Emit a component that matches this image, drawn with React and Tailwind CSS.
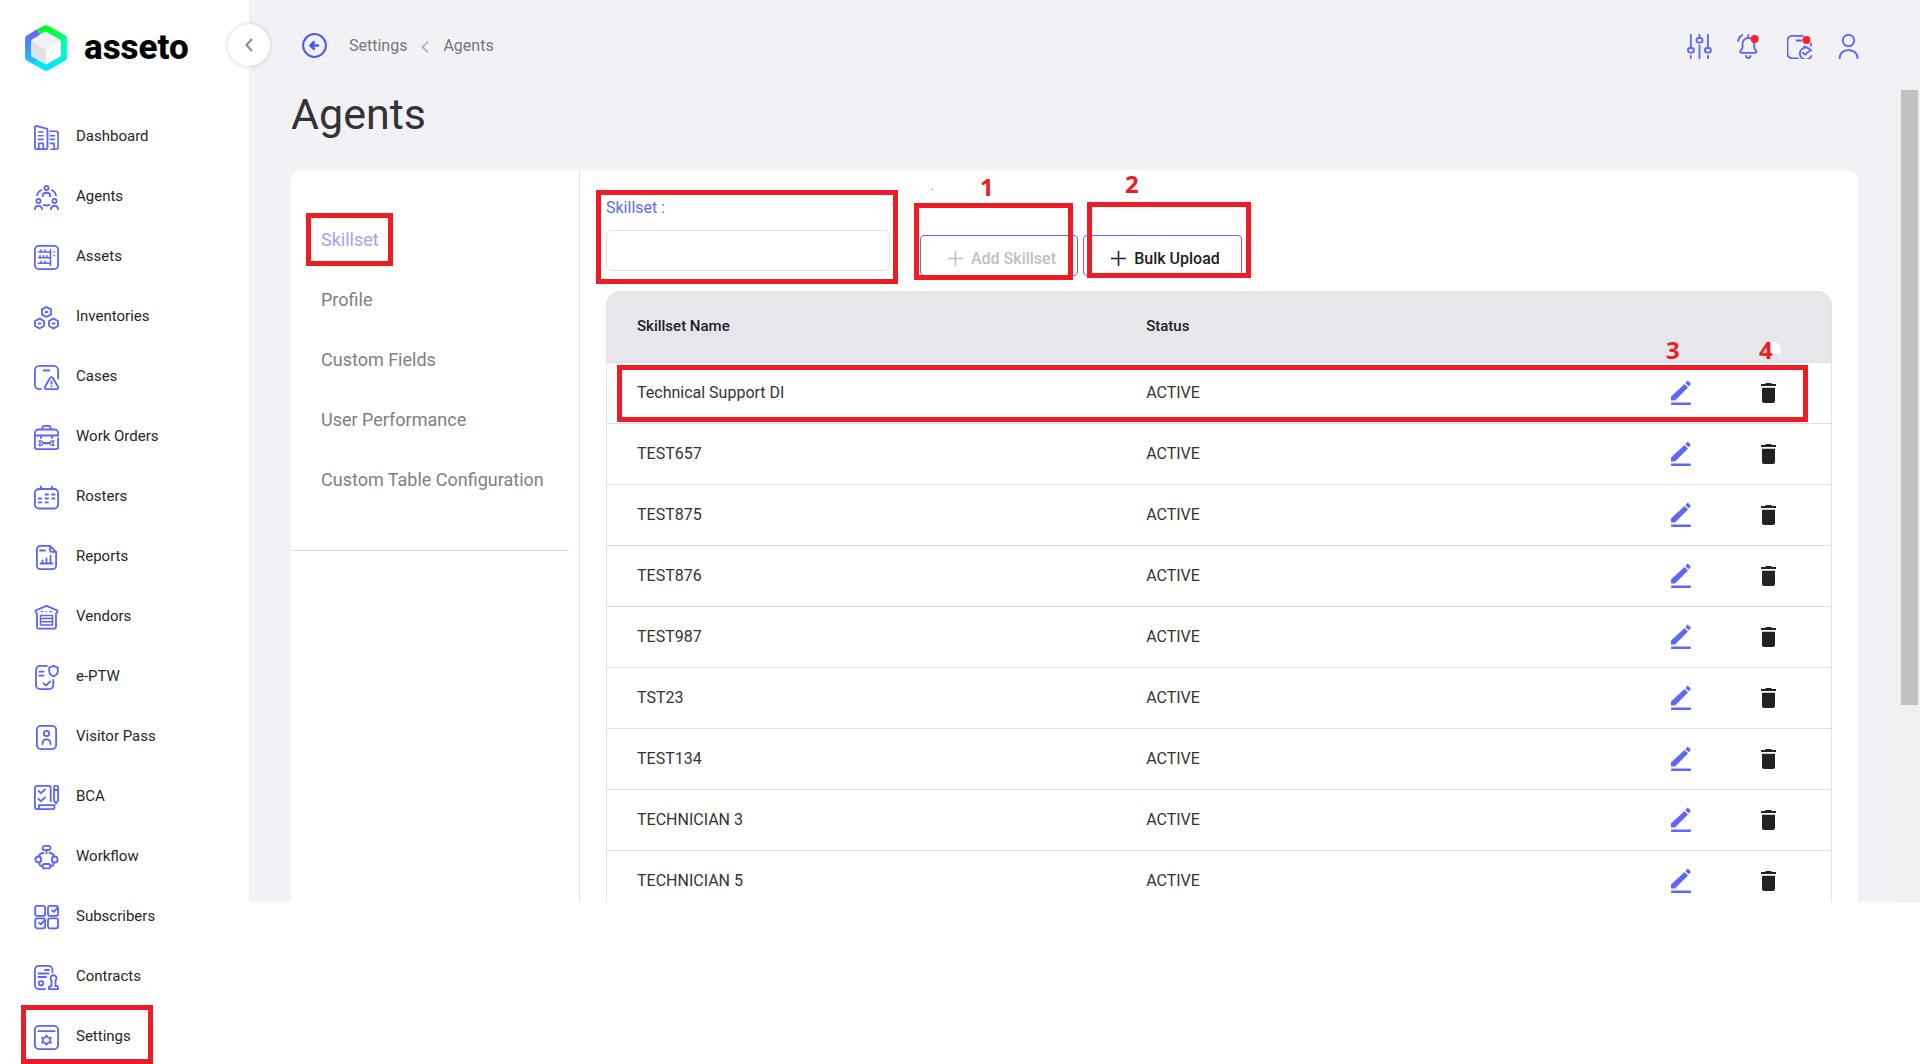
import React from "react";

const Icon = ({ children, className = "h-[25px] w-[25px]" }) => (
  <svg viewBox="0 0 25 25" className={`${className} shrink-0`} fill="none" stroke="#5a62ff" strokeWidth="1.8" strokeLinecap="round" strokeLinejoin="round" aria-hidden="true">
    {children}
  </svg>
);

const menu = [
  {
    label: "Dashboard",
    icon: (
      <>
        <path d="M13.5 22.5V4.6a1 1 0 0 0-.8-1L3 1.1A1.6 1.6 0 0 0 .9 2.6v20a1.6 1.6 0 0 0 1.6 1.6h9.4a1.6 1.6 0 0 0 1.6-1.7Z" />
        <path d="M16 6.3h6a2.2 2.2 0 0 1 2.1 2.2v14.1a1.6 1.6 0 0 1-1.6 1.6H17M4.5 7H9M4.5 10.7H9M4.5 14.4H9M16.3 10.7h4.2M16.3 14.4h4.2M4.8 24v-5.6h4.4V24M16.3 18.4h3.8V24" strokeWidth="1.6" />
      </>
    ),
  },
  {
    label: "Agents",
    icon: (
      <>
        <circle cx="12.5" cy="3" r="2.1" />
        <circle cx="4.5" cy="16" r="2.1" />
        <circle cx="20.5" cy="16" r="2.1" />
        <path d="M8.8 11.2c0-4.6 7.4-4.6 7.4 0M.9 24.4c0-4.7 7.2-4.7 7.2 0M16.9 24.4c0-4.7 7.2-4.7 7.2 0M3 10.4C3.6 8 5 6.2 7 5M22 10.4C21.4 8 20 6.2 18 5M9.7 19.9c1.8.8 3.8.8 5.6 0" />
      </>
    ),
  },
  {
    label: "Assets",
    icon: (
      <>
        <rect x=".9" y=".9" width="23.2" height="23.2" rx="4" />
        <path d="M4.5 7H16M4.5 12.7H16M4.5 18.3H16M16.5 4.6v15.8M7 6.8V5M11 6.8V5M6 12.5v-1.8M9.5 12.5v-1.8M13 12.5v-1.8M7 18v-1.8M11 18v-1.8M20.3 6.8v.1M20.3 10.6v.1" strokeWidth="1.6" />
      </>
    ),
  },
  {
    label: "Inventories",
    icon: (
      <>
        <path d="m12.5 2 4.5 2.4v5L12.5 12 8 9.400v-5ZM5.500 13.600l4.500 2.400v5l-4.500 2.500L1 21v-5ZM19.500 13.600l4.500 2.400v5l-4.500 2.500L15 21v-5Z" />
        <path d="M11.500 7h2M4.500 18.500h2M18.500 18.500h2" />
      </>
    ),
  },
  {
    label: "Cases",
    icon: (
      <>
        <path d="M7 24.1H5.500A4.600 4.600 0 0 1 .9 19.500v-14A4.600 4.600 0 0 1 5.500.9h14a4.600 4.600 0 0 1 4.600 4.600v8M9.700 5.500h5.600" />
        <path d="m16 13-5 8.700a1.600 1.600 0 0 0 1.400 2.400h10.200a1.600 1.600 0 0 0 1.400-2.400L18.900 13a1.700 1.700 0 0 0-2.900 0ZM17.500 16.500v2.200M17.500 21.200v.1" />
      </>
    ),
  },
  {
    label: "Work Orders",
    icon: (
      <>
        <path d="M8.500 4.300V2.500A1.600 1.600 0 0 1 10.100.9h4.800a1.600 1.600 0 0 1 1.600 1.600v1.800M.9 10.500V8a3.500 3.500 0 0 1 3.500-3.500h16.200A3.500 3.500 0 0 1 24.100 8v2.500ZM.9 10.500v11.600a2 2 0 0 0 2 2h19.200a2 2 0 0 0 2-2v-9M7 10.500V13M18 10.500V13" />
        <path d="M5 16c2.400-.6 3.500.4 3.800 1.700h7.400c.3-1.300 1.400-2.300 3.800-1.700l-1.400 2.200 1.400 2.200c-2.400.6-3.500-.4-3.800-1.700H8.800C8.500 20 7.400 21 5 20.400l1.400-2.200Z" strokeWidth="1.300" />
      </>
    ),
  },
  {
    label: "Rosters",
    icon: (
      <>
        <rect x=".9" y="4" width="23.200" height="19.500" rx="4" />
        <path d="M7 1.500V4M18 1.500V4M11.500 9.500h2.500M18 9.500h2.500M4.700 13.500h2.600M11.500 13.500h2.500M18 13.500h2.500M4.700 17.400h2.600M11.500 17.400h2.500" />
      </>
    ),
  },
  {
    label: "Reports",
    icon: (
      <>
        <path d="M16 .9H6.500a3.600 3.600 0 0 0-3.600 3.600v16a3.600 3.600 0 0 0 3.600 3.600h12a3.600 3.600 0 0 0 3.600-3.600V7ZM16 .9v4a2 2 0 0 0 2 2h4M6 5.500h5" />
        <path d="M6.500 18.500h12M8.500 18.500v-3M12.500 18.500v-5M16.500 18.500V11" />
      </>
    ),
  },
  {
    label: "Vendors",
    icon: (
      <>
        <path d="M12.500.9 2.500 4.500A1.500 1.500 0 0 0 2.700 7.400h19.600a1.500 1.500 0 0 0 .2-2.900ZM3 7.500v14.600a1.500 1.500 0 0 0 1.500 1.500h16a1.500 1.500 0 0 0 1.500-1.500V7.500" stroke="none" />
        <path d="M3 8.500v13.600a1.500 1.500 0 0 0 1.500 1.500h16a1.500 1.500 0 0 0 1.500-1.500V8.500M3 8.500 1.600 7V5.500L12.500.9l10.900 4.600V7L22 8.500" />
        <path d="M6.500 20v-9.400h12V20M6.500 13.500h12M6.500 16.700h12M7 20h11M7.500 6.500h1.200M12.400 6.500h.2M16 6.500h1.200" strokeWidth="1.500" />
      </>
    ),
  },
  {
    label: "e-PTW",
    icon: (
      <>
        <path d="M13 .9H6A4 4 0 0 0 2 4.900v15.200a4 4 0 0 0 4 4h9.300a4 4 0 0 0 4-4V15M5.500 6.700h4M5.500 10.700h4M9.500 18.300l2.600 2.300 4-4.200" />
        <path d="m19.500.9 4.300 1.700v3.600c0 2.300-1.500 4-4.300 5.200-2.800-1.200-4.300-2.900-4.300-5.200V2.600Z" />
      </>
    ),
  },
  {
    label: "Visitor Pass",
    icon: (
      <>
        <rect x="2.900" y=".9" width="19.200" height="23.200" rx="4" />
        <circle cx="12.500" cy="8.500" r="2.700" />
        <path d="M8.500 19c0-6.200 8-6.200 8 0" />
      </>
    ),
  },
  {
    label: "BCA",
    icon: (
      <>
        <path d="M16.700 16V3a2.100 2.100 0 0 0-2.100-2.100H3A2.100 2.100 0 0 0 .9 3v19A2.100 2.100 0 0 0 3 24.100h15.500a2 2 0 0 0 2-2v-2H5v2.400A1.600 1.600 0 0 1 3 24" />
        <path d="M4.500 6l2.400 2.200L11 4.500M4.500 14l2.400 2.200L11 12.300M20 2.500a2 2 0 0 1 4.100 0v12.900L22 18.500l-2-3.100ZM20 5h4" />
      </>
    ),
  },
  {
    label: "Workflow",
    icon: (
      <>
        <rect x="8.500" y=".9" width="8" height="4.200" rx="2.100" />
        <ellipse cx="4.300" cy="14.500" rx="2.900" ry="3" />
        <ellipse cx="20.700" cy="14.500" rx="2.900" ry="3" />
        <rect x="8.500" y="19" width="8" height="4.400" rx="2.200" />
        <path d="M12.500 5.300v3M5 11.300C5.500 8.800 7.200 8 9.500 8M20 11.300C19.500 8.800 17.800 8 15.500 8M5.300 17.700c0 2.300 1 3.500 3.200 3.500M19.700 17.700c0 2.300-1 3.500-3.200 3.500" />
      </>
    ),
  },
  {
    label: "Subscribers",
    icon: (
      <>
        <rect x="1.200" y=".9" width="10" height="10" rx="2" />
        <rect x="14" y=".9" width="10" height="10" rx="2" />
        <rect x="1.200" y="13.300" width="10" height="10" rx="2" />
        <rect x="14" y="13.300" width="10" height="10" rx="2" />
        <path d="m18 5.300 1.800 1.600 3.600-4M5 17.700l1.800 1.600 3.600-4" />
      </>
    ),
  },
  {
    label: "Contracts",
    icon: (
      <>
        <path d="M11 24.100H4.900a4 4 0 0 1-4-4V4.900a4 4 0 0 1 4-4h9.500a4 4 0 0 1 4 4v2.600M11 5h4M4.500 8.500h10M4.500 12H12" />
        <circle cx="7" cy="18.300" r="2.200" />
        <path d="M17.500 21v-5.500a3 3 0 1 1 4 0V21h.8a1.600 1.600 0 0 1 1.700 1.600v1.500h-9v-1.500a1.600 1.600 0 0 1 1.600-1.600Z" />
      </>
    ),
  },
  {
    label: "Settings",
    marked: true,
    icon: (
      <>
        <rect x=".9" y=".9" width="23.200" height="23.200" rx="4" />
        <path d="M4.500 6.200h16" />
        <path d="m12.500 10.500 1.600 2.300 2.900-.1-1.300 2.500 1.300 2.500-2.900-.1-1.600 2.300-1.600-2.300-2.900.1 1.300-2.500L8 12.700l2.900.1Z" strokeWidth="1.600" />
      </>
    ),
  },
];

const tabs = ["Skillset", "Profile", "Custom Fields", "User Performance", "Custom Table Configuration"];

const skillsets = ["Technical Support DI", "TEST657", "TEST875", "TEST876", "TEST987", "TST23", "TEST134", "TECHNICIAN 3", "TECHNICIAN 5"];

// Red call-out frame laid over the control it explains
const Frame = ({ className }) => <span className={`pointer-events-none absolute z-10 border-5 border-[#ee1c25] ${className}`} />;

const Num = ({ children, className }) => (
  <span className={`pointer-events-none absolute z-10 font-['Noto_Sans'] text-2xl leading-6 font-bold text-[#ee1c25] ${className}`}>{children}</span>
);

const Logo = () => (
  <a href="#" className="flex items-center gap-[17px]">
    <svg viewBox="0 0 42 46" className="h-[46px] w-[42px]" fill="none" aria-hidden="true">
      <defs>
        <linearGradient id="ring" x1="0" y1="0" x2="0" y2="1">
          <stop offset="0" stopColor="#00ff1e" />
          <stop offset=".45" stopColor="#00ffc0" />
          <stop offset="1" stopColor="#00e4ff" />
        </linearGradient>
        <linearGradient id="ringLeft" x1="0" y1="0" x2="0" y2="1">
          <stop offset="0" stopColor="#6a62fb" />
          <stop offset="1" stopColor="#10c4ff" />
        </linearGradient>
      </defs>
      <path d="M13.500 6.800 21 3.200l17.800 10.100v19.400L21 42.800 10 36.500" stroke="url(#ring)" strokeWidth="6.200" strokeLinejoin="round" />
      <path d="M13.500 7 3.200 13.300v19.400l7.300 4.100" stroke="url(#ringLeft)" strokeWidth="6.200" strokeLinejoin="round" />
      <path d="m21 6.500 14.500 9L21 25 6.500 15.500Z" fill="#f1f1f1" />
      <path d="M6.500 15.500 21 25v14.500l-14.500-8Z" fill="#e2e2e2" />
      <path d="M35.500 15.500 21 25v14.500l14.500-8Z" fill="#fff" />
    </svg>
    <span className="text-[35px] leading-10 font-extrabold text-black">asseto</span>
  </a>
);

const Sidebar = () => (
  <aside className="relative w-[249px] shrink-0 bg-white">
    <div className="h-[115px] pt-[25px] pl-[25px]">
      <Logo />
    </div>
    <button type="button" aria-label="Collapse menu" className="absolute top-6 -right-[21px] z-10 flex h-[42px] w-[42px] items-center justify-center rounded-full bg-white shadow-[0_0_4px_rgba(0,0,0,0.2)]">
      <svg viewBox="0 0 8 14" className="h-3.5 w-2" fill="none" stroke="#8c8c8c" strokeWidth="2" aria-hidden="true">
        <path d="M7 1 1.500 7 7 13" />
      </svg>
    </button>
    <nav className="flex flex-col gap-3 pl-[34px]">
      {menu.map(({ label, icon, marked }) => (
        <a key={label} href="#" className="relative flex h-12 items-start gap-[17px] pt-2.5 text-[15px] leading-[22px] text-[#262626]">
          <Icon>{icon}</Icon>
          {label}
          {marked && <Frame className="-top-2.5 -left-[13px] h-[59px] w-[132px]" />}
        </a>
      ))}
    </nav>
  </aside>
);

const Header = () => (
  <header className="flex h-[90px] items-start justify-between pt-[33px] pr-[58px] pl-[53px]">
    <div className="flex items-center text-base leading-[25px] text-[#777]">
      <button type="button" aria-label="Back">
        <svg viewBox="0 0 25 25" className="h-[25px] w-[25px]" fill="none" stroke="#4a5cf0" strokeWidth="2" aria-hidden="true">
          <circle cx="12.500" cy="12.500" r="11.400" />
          <path d="M17 12.500H9M12.500 8.500l-4 4 4 4" strokeWidth="2.600" />
        </svg>
      </button>
      <a href="#" className="ml-[22px]">Settings</a>
      <svg viewBox="0 0 8 12" className="mx-3.5 mt-0.5 h-3 w-2" fill="none" stroke="#b4b4b8" strokeWidth="1.800" aria-hidden="true">
        <path d="M7 .7 1.500 6 7 11.300" />
      </svg>
      <a href="#">Agents</a>
    </div>
    <div className="flex gap-[25px] pt-px">
      <button type="button" aria-label="Preferences">
        <Icon>
          <path d="M3.800.8v12.800M3.800 22v2.200M12.500.8v2.400M12.500 11.500v12.700M20.900.8v12.800M20.900 22v2.200" />
          <rect x=".9" y="14" width="6" height="4.600" rx="2.300" />
          <rect x="9.500" y="4" width="6" height="4.600" rx="2.300" />
          <rect x="17.900" y="14" width="6" height="4.600" rx="2.300" />
        </Icon>
      </button>
      <button type="button" aria-label="Notifications">
        <Icon>
          <path d="M5.500 10.500c0-3.900 2.400-6.500 5.800-6.500s5.900 2.600 5.900 6.500v3.300l2 3.200c.6 1-.1 1.900-1.200 1.900H4.700c-1.100 0-1.800-.9-1.200-1.900l2-3.200ZM11.300 4V.9M9 22c.4 2.600 4.200 2.600 4.600 0M1.200 7c.3-2.600 1.700-4.700 4-6" />
          <circle cx="17.700" cy="5" r="4" fill="#ff1f2d" stroke="none" />
        </Icon>
      </button>
      <button type="button" aria-label="Tasks">
        <Icon>
          <path d="M11 24.300H5a4.500 4.500 0 0 1-4.500-4.500V6.400A4.500 4.500 0 0 1 5 1.900h11M9.500 6.500h5M24 9.500v2" />
          <path d="M24 16.500a6 6 0 1 0 .3 5.500M20 13.500a6 6 0 0 0-3-.8M15.700 18.700l2.600 2 5.200-4.900" />
          <circle cx="19.500" cy="6" r="4" fill="#ff1f2d" stroke="none" />
        </Icon>
      </button>
      <button type="button" aria-label="Account">
        <Icon>
          <circle cx="11.500" cy="6.500" r="5.700" />
          <path d="M2.700 24.200c0-10.900 17.800-10.900 17.800 0" />
        </Icon>
      </button>
    </div>
  </header>
);

const Plus = () => (
  <svg viewBox="0 0 15 15" className="h-[15px] w-[15px]" stroke="currentColor" strokeWidth="1.600" aria-hidden="true">
    <path d="M7.500 0v15M0 7.500h15" />
  </svg>
);

const SkillsetForm = () => (
  <div className="relative flex items-start">
    <div className="relative w-[284px]">
      <label htmlFor="skillset" className="block text-base leading-5 text-[#6267f5]">Skillset :</label>
      <input id="skillset" type="text" className="mt-3 block h-[41px] w-full rounded-md border border-[#dfe1e8] bg-white px-3 text-base outline-none" />
      <Frame className="-top-2 -left-2.5 h-[94px] w-[302px]" />
    </div>
    <div className="mt-[37px] ml-[30px] flex gap-[5px]">
      <div className="relative">
        <button type="button" disabled className="flex h-[41px] w-[158px] items-center justify-center gap-2 rounded border border-[#6267fb] pt-1.5 pl-1.5 text-base font-medium text-[#c0c0c0]">
          <Plus />
          Add Skillset
        </button>
        <Frame className="-top-8 -left-1.5 h-[77px] w-[159px]" />
        <Num className="-top-[60px] left-[60px]">1</Num>
        <span className="absolute -top-[46px] left-3 h-px w-px bg-[#ee1c25]" />
      </div>
      <div className="relative">
        <button type="button" className="flex h-[41px] w-[159px] items-center justify-center gap-2 rounded border border-[#6267fb] pt-1.5 pl-1.5 text-base font-medium text-[#222]">
          <Plus />
          Bulk Upload
        </button>
        <Frame className="-top-[33px] left-1 h-[76px] w-[164px]" />
        <Num className="-top-[63px] left-[42px]">2</Num>
      </div>
    </div>
  </div>
);

const SkillsetTable = () => (
  <div className="relative mt-[15px] overflow-hidden rounded-t-[14px] border-x border-[#e2e2e7]">
    <table className="w-full table-fixed text-left text-base text-[#333]">
      <thead>
        <tr className="h-[71px] border-b border-[#dedee2] bg-[#e7e6eb] text-[15px] text-[#222]">
          <th className="w-[41.6%] pl-[30px] font-medium">Skillset Name</th>
          <th className="pl-[30px] font-medium">Status</th>
          <th className="relative w-[88px]" aria-label="Edit">
            <Num className="bottom-0 left-[29px]">3</Num>
          </th>
          <th className="relative w-[106px]" aria-label="Delete">
            <span className="absolute bottom-2 left-[46px] h-3 w-2.5 rounded-tr-lg bg-white" />
            <Num className="bottom-0 left-[34px]">4</Num>
          </th>
        </tr>
      </thead>
      <tbody>
        {skillsets.map((name) => (
          <tr key={name} className="h-[61px] border-b border-[#dedede]">
            <td className="pl-[30px]">{name}</td>
            <td className="pl-[30px]">ACTIVE</td>
            <td>
              <button type="button" aria-label={`Edit ${name}`} className="mx-auto block">
                <svg viewBox="0 0 20 26" className="h-[26px] w-5" fill="#5f66ff" aria-hidden="true">
                  <path d="M0 16.500 13.500 4 17 7.500 4 20.500H0ZM14.300 2.900 16.800.5 20 3.900l-2.300 2.400Z" />
                  <rect y="22.500" width="20" height="2.600" rx=".8" />
                </svg>
              </button>
            </td>
            <td className="pr-[19px]">
              <button type="button" aria-label={`Delete ${name}`} className="mx-auto block">
                <svg viewBox="0 0 15 20" className="h-5 w-[15px]" fill="#222" aria-hidden="true">
                  <path d="M0 1h4l1-1h5l1 1h4v2H0ZM1 4.700h13V18a2 2 0 0 1-2 2H3a2 2 0 0 1-2-2Z" />
                </svg>
              </button>
            </td>
          </tr>
        ))}
      </tbody>
    </table>
    <Frame className="top-[74px] right-[23px] left-2.5 h-[57px]" />
  </div>
);

const App = () => {
  return (
    <div className="flex h-screen overflow-hidden bg-white font-[Roboto,sans-serif]">
      <Sidebar />
      <main className="flex h-[calc(100vh-162px)] min-w-0 flex-1 flex-col overflow-hidden bg-[#f2f1f6]">
        <Header />
        <div className="flex min-h-0 flex-1">
          <section className="flex min-w-0 flex-1 flex-col overflow-hidden pr-[41px] pl-[42px]">
            <h1 className="text-[43px] leading-[48px] text-[#333]">Agents</h1>
            <div className="mt-8 flex min-h-0 flex-1 rounded-t-[10px] bg-white">
              <div className="w-[289px] shrink-0 border-r border-[#e2e2e6] pt-[60px]">
                <nav className="flex flex-col items-start gap-10 pl-[30px] text-lg leading-5 text-[#808080]">
                  {tabs.map((tab, i) => (
                    <a key={tab} href="#" className={i === 0 ? "relative text-[#a0a2fa]" : ""}>
                      {tab}
                      {i === 0 && <Frame className="-top-[17px] -left-[15px] h-[53px] w-[87px]" />}
                    </a>
                  ))}
                </nav>
                <hr className="mt-[60px] mr-2.5 border-[#dcdce0]" />
              </div>
              <div className="min-w-0 flex-1 pt-7 pr-[26px] pl-[26px]">
                <SkillsetForm />
                <SkillsetTable />
              </div>
            </div>
          </section>
          {/* Scroll track */}
          <div className="w-[21px] bg-[#f0f0f0] px-0.5">
            <div className="h-[75.7%] bg-[#c1c1c1]" />
          </div>
        </div>
      </main>
    </div>
  );
};

export default App;
